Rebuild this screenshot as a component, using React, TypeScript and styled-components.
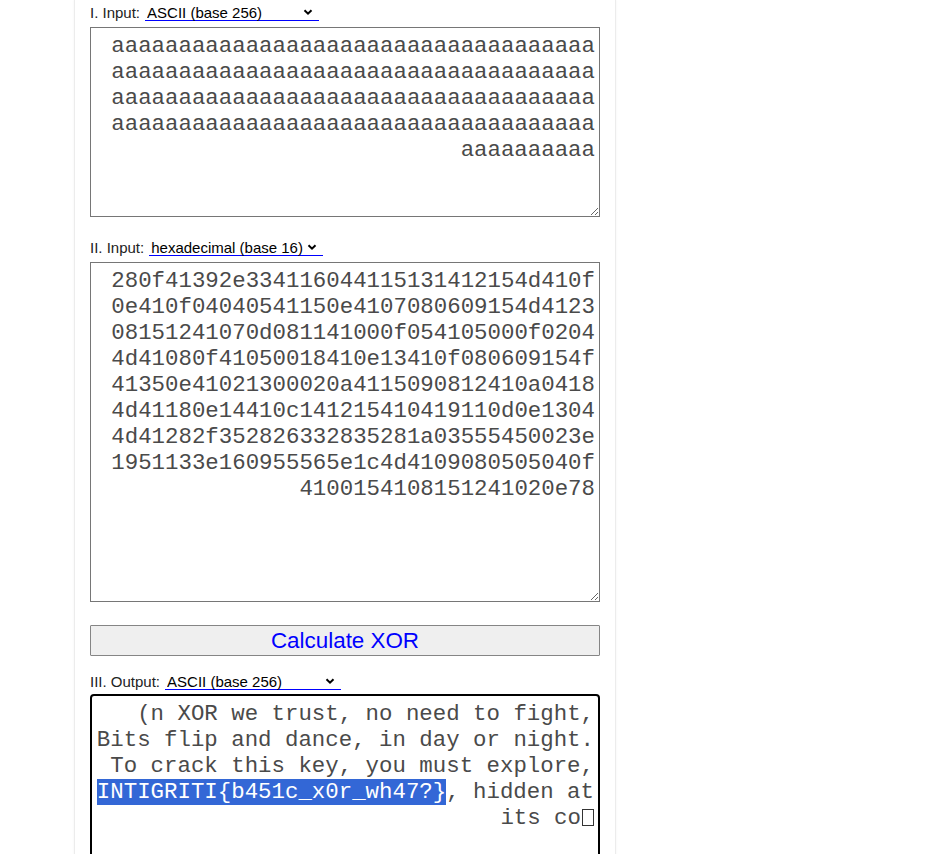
import React from "react";
import styled, { createGlobalStyle } from "styled-components";

const GlobalStyle = createGlobalStyle`
  html, body {
    margin: 0;
    padding: 0;
    background: #fff;
    overflow: hidden;
    font-family: "Liberation Sans", Arial, sans-serif;
  }
`;

const MONO = `"Courier New", "Nimbus Mono PS", "FreeMono", "Liberation Mono", monospace`;

const Page = styled.div`
  width: 542px;
  margin-left: 74px;
  box-sizing: border-box;
  padding: 4px 15px 0 15px;
  border-left: 1px solid #ececec;
  border-right: 1px solid #ececec;
  box-shadow: 0 0 2px rgba(0, 0, 0, 0.06);
  min-height: 854px;
`;

const LabelRow = styled.div<{ $top: number }>`
  display: flex;
  align-items: flex-end;
  gap: 5px;
  height: 17px;
  margin-top: ${(p) => p.$top}px;
  font-size: 15px;
  color: #222;
  line-height: 17px;
`;

const SelectWrap = styled.label<{ $width: number }>`
  display: inline-flex;
  align-items: center;
  width: ${(p) => p.$width}px;
  height: 17px;
  box-sizing: border-box;
  border-bottom: 1px solid #0000ff;
`;

const Select = styled.select`
  appearance: none;
  -webkit-appearance: none;
  flex: 1;
  min-width: 0;
  border: none;
  background: transparent;
  font-family: "Liberation Sans", Arial, sans-serif;
  font-size: 15px;
  color: #000;
  padding: 0 0 0 2px;
  margin: 0;
  outline: none;
  height: 17px;
  line-height: 17px;
`;

const Chevron = styled.svg`
  flex: none;
  margin-right: 5px;
  pointer-events: none;
`;

const TextBox = styled.textarea<{ $height: number }>`
  display: block;
  box-sizing: border-box;
  width: 100%;
  height: ${(p) => p.$height}px;
  margin: 6px 0 0;
  padding: 5px 4px 4px 14px;
  border: 1px solid #767676;
  border-radius: 0;
  font-family: ${MONO};
  font-size: 22.4px;
  line-height: 26px;
  color: #4a4a4a;
  text-align: right;
  resize: both;
  overflow: hidden;
  outline: none;
  background: #fff;
`;

const CalcButton = styled.button`
  display: block;
  box-sizing: border-box;
  width: 100%;
  height: 31px;
  margin-top: 23px;
  padding: 0;
  background: #efefef;
  border: 1px solid #858585;
  border-radius: 1px;
  font-family: "Liberation Sans", Arial, sans-serif;
  font-size: 22.4px;
  color: #0000ff;
  cursor: pointer;
`;

const OutputBox = styled.div`
  box-sizing: border-box;
  width: 100%;
  height: 200px;
  margin-top: 4px;
  padding: 5px 4px 4px 2px;
  border: 2px solid #000;
  border-radius: 4px;
  font-family: ${MONO};
  font-size: 22.4px;
  line-height: 26px;
  color: #4a4a4a;
  text-align: right;
  white-space: pre-wrap;
  overflow: hidden;
`;

const Selected = styled.span`
  background: #3367d6;
  color: #fff;
`;

const Tofu = styled.span`
  display: inline-block;
  box-sizing: border-box;
  width: 12px;
  height: 17px;
  margin-left: 1px;
  border: 1px solid #333;
  vertical-align: -2px;
`;

const ChevronIcon = () => (
  <Chevron width="12" height="12" viewBox="0 0 12 12">
    <path d="M2.5 4.2 L6 7.7 L9.5 4.2" fill="none" stroke="#000" strokeWidth="2" />
  </Chevron>
);

const Picker: React.FC<{ value: string; options: string[]; width: number }> = ({ value, options, width }) => (
  <SelectWrap $width={width}>
    <Select defaultValue={value}>
      {options.map((o) => (
        <option key={o}>{o}</option>
      ))}
    </Select>
    <ChevronIcon />
  </SelectWrap>
);

const BASES = ["ASCII (base 256)", "hexadecimal (base 16)", "decimal (base 10)", "binary (base 2)"];

const KEY_A = "a".repeat(154);
const HEX =
  "280f41392e334116044115131412154d410f" +
  "0e410f04040541150e4107080609154d4123" +
  "08151241070d081141000f054105000f0204" +
  "4d41080f41050018410e13410f080609154f" +
  "41350e41021300020a4115090812410a0418" +
  "4d41180e14410c141215410419110d0e1304" +
  "4d41282f352826332835281a03555450023e" +
  "1951133e160955565e1c4d4109080505040f" +
  "4100154108151241020e78";

export default function App() {
  return (
    <>
      <GlobalStyle />
      <Page>
        <LabelRow $top={0}>
          <span>I. Input:</span>
          <Picker value={BASES[0]} options={BASES} width={174} />
        </LabelRow>
        <TextBox $height={190} defaultValue={KEY_A} spellCheck={false} />

        <LabelRow $top={22}>
          <span>II. Input:</span>
          <Picker value={BASES[1]} options={BASES} width={174} />
        </LabelRow>
        <TextBox $height={340} defaultValue={HEX} spellCheck={false} />

        <CalcButton>Calculate XOR</CalcButton>

        <LabelRow $top={17}>
          <span>III. Output:</span>
          <Picker value={BASES[0]} options={BASES} width={176} />
        </LabelRow>
        <OutputBox>
          {"(n XOR we trust, no need to fight,\nBits flip and dance, in day or night.\nTo crack this key, you must explore,\n"}
          <Selected>INTIGRITI{"{b451c_x0r_wh47?}"}</Selected>
          {", hidden at its co"}
          <Tofu />
        </OutputBox>
      </Page>
    </>
  );
}
